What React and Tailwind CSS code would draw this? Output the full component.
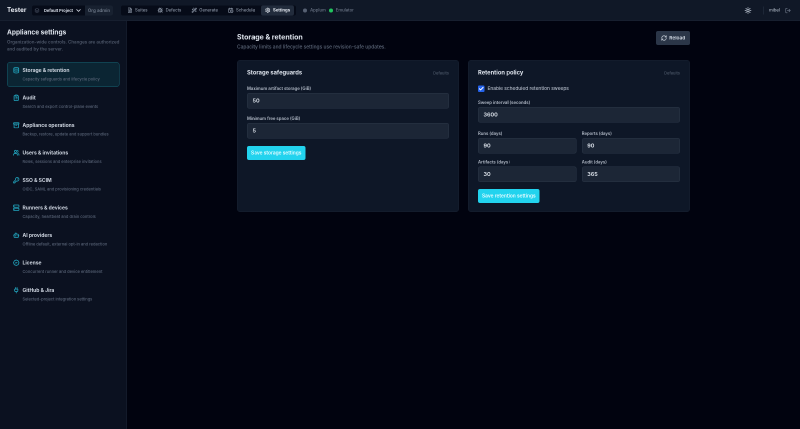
import React from "react";
import {
  FileText,
  Bug,
  Wand2,
  CalendarClock,
  Settings,
  ChevronDown,
  Layers,
  Sun,
  LogOut,
  RefreshCw,
  Database,
  ClipboardList,
  Archive,
  Users,
  KeyRound,
  Server,
  Bot,
  BadgeCheck,
  Plug,
  Check,
} from "lucide-react";

const tabs = [
  { name: "Suites", icon: FileText },
  { name: "Defects", icon: Bug },
  { name: "Generate", icon: Wand2 },
  { name: "Schedule", icon: CalendarClock },
  { name: "Settings", icon: Settings, active: true },
];

const sections = [
  { title: "Storage & retention", sub: "Capacity safeguards and lifecycle policy", icon: Database, active: true },
  { title: "Audit", sub: "Search and export control-plane events", icon: ClipboardList },
  { title: "Appliance operations", sub: "Backup, restore, update and support bundles", icon: Archive },
  { title: "Users & invitations", sub: "Roles, sessions and enterprise invitations", icon: Users },
  { title: "SSO & SCIM", sub: "OIDC, SAML and provisioning credentials", icon: KeyRound },
  { title: "Runners & devices", sub: "Capacity, heartbeat and drain controls", icon: Server },
  { title: "AI providers", sub: "Offline default, external opt-in and redaction", icon: Bot },
  { title: "License", sub: "Concurrent runner and device entitlement", icon: BadgeCheck },
  { title: "GitHub & Jira", sub: "Selected-project integration settings", icon: Plug },
];

const Field = ({ label, value, className }) => (
  <div className={className}>
    <div className="h-[14px] text-[8.5px] leading-[14px] font-semibold text-[#b4bcc9]">{label}</div>
    <div className="mt-[2px] flex h-[31px] items-center rounded-[4px] border border-[#2a3546] bg-[#1c2636] px-[10px] text-[11px] font-semibold text-[#e2e8f0]">
      {value}
    </div>
  </div>
);

const CardHead = ({ title }) => (
  <div className="flex h-[16px] items-center justify-between">
    <h2 className="text-[11.5px] font-bold text-[#dde3ec]">{title}</h2>
    <span className="text-[8px] font-medium text-[#4c5768]">Defaults</span>
  </div>
);

const SaveButton = ({ children }) => (
  <button className="flex h-[28px] items-center rounded-[4px] bg-[#22d3ee] px-[8px] text-[9.7px] font-semibold whitespace-nowrap text-[#e6fbff]">
    {children}
  </button>
);

const App = () => {
  return (
    <div className="h-[429px] w-[800px] overflow-hidden">
      {/* page is laid out at 1600 wide and shown at half size */}
      <div className="flex h-[858px] w-[1600px] origin-top-left scale-50 flex-col bg-[#01030f] font-['Inter',sans-serif] will-change-transform">
        <header className="flex h-[42px] shrink-0 items-center border-b border-[#1d2636] bg-[#101827] pl-[14px] pr-[18px]">
          <span className="w-[50px] text-[12.5px] font-bold text-[#e5e9f0]">Tester</span>
          <div className="flex h-[20px] items-center rounded-[4px] bg-[#060b18]">
            <div className="flex w-[106px] items-center whitespace-nowrap pl-[5px] text-[8px] font-bold text-[#d5dbe5]">
              <Layers className="mr-[9px] h-[10px] w-[10px] text-[#586274]" />
              Default Project
              <ChevronDown className="ml-[4px] h-[14px] w-[14px] text-[#d5dbe5]" strokeWidth={3} />
            </div>
            <div className="flex h-full w-[56px] items-center justify-center rounded-r-[4px] bg-[#182130] text-[9px] font-medium whitespace-nowrap text-[#7b8696]">
              Org admin
            </div>
          </div>
          <div className="ml-[16px] flex h-[20px] items-center gap-[4px] rounded-[4px] bg-[#060b18] px-[4px]">
            {tabs.map((t) => {
              const Icon = t.icon;
              return (
                <div
                  key={t.name}
                  className={`flex h-full items-center gap-[5px] rounded-[4px] px-[8px] text-[8.5px] ${
                    t.active ? "bg-[#222c3c] font-bold text-[#dfe4ec]" : "font-medium text-[#8b95a5]"
                  }`}
                >
                  <Icon className="h-[11px] w-[11px]" strokeWidth={2.6} />
                  {t.name}
                </div>
              );
            })}
          </div>
          <div className="ml-[14px] flex items-center text-[8.5px] font-medium text-[#6e7889]">
            <span className="mr-[6px] h-[8px] w-[8px] rounded-full bg-[#566072]" />
            Applum
            <span className="mx-[6px] h-[8px] w-[8px] rounded-full bg-[#22c55e]" />
            Emulator
          </div>
          <div className="ml-auto flex items-center">
            <Sun className="h-[14px] w-[14px] text-[#aab3c0]" strokeWidth={3} />
            <span className="ml-[23px] h-[16px] w-px bg-[#2a3546]" />
            <span className="ml-[11px] text-[8.5px] font-medium text-[#aab3c0]">mibel</span>
            <LogOut className="ml-[10px] h-[12px] w-[12px] text-[#6e7889]" strokeWidth={2.5} />
          </div>
        </header>

        <div className="flex min-h-0 flex-1">
          <aside className="w-[254px] shrink-0 border-r border-[#1a2333] bg-[#0b1120] px-[14px] pt-[14px]">
            <h1 className="text-[13px] leading-[16px] font-bold text-[#dde3ec]">Appliance settings</h1>
            <p className="mt-[5px] text-[9px] leading-[14px] font-medium text-[#586274]">
              Organization-wide controls. Changes are authorized and audited by the server.
            </p>
            <nav className="mt-[19px] flex flex-col gap-[5px]">
              {sections.map((s) => {
                const Icon = s.icon;
                return (
                  <div
                    key={s.title}
                    className={`flex h-[50px] items-start gap-[6px] rounded-[6px] border pl-[11px] pt-[8px] ${
                      s.active ? "border-[#155e6e] bg-[#0b2533]" : "border-transparent"
                    }`}
                  >
                    <Icon className="mt-[1px] h-[13px] w-[13px] shrink-0 text-[#22a7c0]" strokeWidth={2.8} />
                    <div>
                      <div className="text-[10px] leading-[14px] font-bold text-[#ccd3de]">{s.title}</div>
                      <div className="mt-[5px] text-[8px] leading-[12px] font-medium whitespace-nowrap text-[#5a6578]">{s.sub}</div>
                    </div>
                  </div>
                );
              })}
            </nav>
          </aside>

          <main className="flex-1 pl-[220px] pt-[20px]">
            <div className="w-[906px]">
              <div className="flex h-[58px] items-start justify-between">
                <div className="pt-[2px]">
                  <h2 className="text-[14px] leading-[20px] font-bold text-[#dde3ec]">Storage & retention</h2>
                  <p className="mt-[3px] text-[9.8px] leading-[14px] font-medium text-[#5e697b]">
                    Capacity limits and lifecycle settings use revision-safe updates.
                  </p>
                </div>
                <button className="flex h-[28px] w-[68px] items-center justify-center gap-[5px] rounded-[4px] bg-[#2b3648] text-[9.5px] font-bold text-[#cbd2dc]">
                  <RefreshCw className="h-[12px] w-[12px]" strokeWidth={2.6} />
                  Reload
                </button>
              </div>
              <div className="grid grid-cols-[444px_444px] gap-[18px]">
                <section className="h-[304px] rounded-[6px] border border-[#182131] bg-[#0e1727] px-[19px] pt-[17px]">
                  <CardHead title="Storage safeguards" />
                  <Field className="mt-[16px]" label="Maximum artifact storage (GiB)" value="50" />
                  <Field className="mt-[13px]" label="Minimum free space (GiB)" value="5" />
                  <div className="mt-[15px]">
                    <SaveButton>Save storage settings</SaveButton>
                  </div>
                </section>
                <section className="h-[304px] rounded-[6px] border border-[#182131] bg-[#0e1727] px-[19px] pt-[17px]">
                  <CardHead title="Retention policy" />
                  <div className="mt-[16px] flex h-[14px] items-center gap-[6px] text-[9.6px] font-medium text-[#b4bcc9]">
                    <span className="flex h-[13px] w-[13px] items-center justify-center rounded-[2px] bg-[#2563eb]">
                      <Check className="h-[11px] w-[11px] text-white" strokeWidth={4} />
                    </span>
                    Enable scheduled retention sweeps
                  </div>
                  <Field className="mt-[14px]" label="Sweep interval (seconds)" value="3600" />
                  <div className="mt-[15px] grid grid-cols-2 gap-x-[11px] gap-y-[10px]">
                    <Field label="Runs (days)" value="90" />
                    <Field label="Reports (days)" value="90" />
                    <Field label="Artifacts (days)" value="30" />
                    <Field label="Audit (days)" value="365" />
                  </div>
                  <div className="mt-[14px]">
                    <SaveButton>Save retention settings</SaveButton>
                  </div>
                </section>
              </div>
            </div>
          </main>
        </div>
      </div>
    </div>
  );
};

export default App;
